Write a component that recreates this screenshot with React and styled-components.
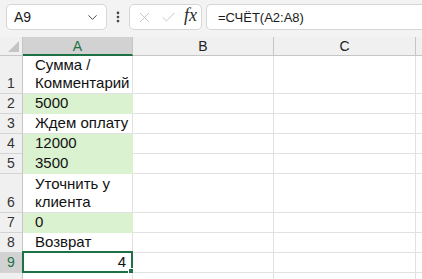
import React from "react";
import styled, { createGlobalStyle } from "styled-components";
import { ChevronDown, EllipsisVertical, X, Check } from "lucide-react";

const GREEN = "#1e7145";
const FILL = "#daf2d0";

const rows = [
  { n: 1, h: 38, lines: ["Сумма /", "Комментарий"] },
  { n: 2, h: 20, lines: ["5000"], fill: true },
  { n: 3, h: 20, lines: ["Ждем оплату"] },
  { n: 4, h: 20, lines: ["12000"], fill: true },
  { n: 5, h: 20, lines: ["3500"], fill: true },
  { n: 6, h: 39, lines: ["Уточнить у", "клиента"] },
  { n: 7, h: 20, lines: ["0"], fill: true },
  { n: 8, h: 20, lines: ["Возврат"] },
  { n: 9, h: 20, lines: ["4"], right: true, active: true },
  { n: "", h: 20, lines: [] },
];

const Global = createGlobalStyle`
  body {
    margin: 0;
    background: #f3f3f3;
    font-family: "Liberation Sans", Arial, sans-serif;
    overflow: hidden;
  }
`;

const Page = styled.div`
  width: 422px;
  height: 279px;
  overflow: hidden;
  background: #f3f3f3;
`;

const Toolbar = styled.div`
  display: flex;
  align-items: center;
  height: 26px;
  padding: 4px 0 7px 6px;
`;

const Box = styled.div`
  display: flex;
  align-items: center;
  height: 26px;
  box-sizing: border-box;
  background: #fff;
  border: 1px solid #d6d6d6;
  border-radius: 5px;
`;

const NameBox = styled(Box)`
  width: 101px;
  padding: 0 6px 0 0;
  font-size: 14px;
  color: #1a1a1a;
  span {
    flex: 1;
    padding-left: 7px;
  }
`;

const Dots = styled.div`
  display: flex;
  align-items: center;
  justify-content: center;
  width: 22px;
  color: #444;
`;

const ButtonsBox = styled(Box)`
  width: 73px;
  justify-content: space-between;
  padding: 0 4px 0 6px;
`;

const Fx = styled.span`
  font-family: "Liberation Serif", "Times New Roman", serif;
  font-style: italic;
  font-size: 18px;
  color: #2b2b2b;
  margin-top: -3px;
`;

const FormulaBox = styled(Box)`
  flex: 1;
  margin-left: 4px;
  border-right: none;
  border-radius: 5px 0 0 5px;
  padding-left: 11px;
  font-size: 13px;
  color: #1a1a1a;
`;

const Grid = styled.div`
  display: grid;
  grid-template-columns: 23px 110px 141px 142px 20px;
  background: #fff;
`;

const Corner = styled.div`
  height: 19px;
  box-sizing: border-box;
  background: #f0f0f0;
  border-right: 1px solid #c6c6c6;
  border-bottom: 1px solid #c6c6c6;
  position: relative;
  &::after {
    content: "";
    position: absolute;
    right: 3px;
    bottom: 3px;
    border-style: solid;
    border-width: 0 0 11px 11px;
    border-color: transparent transparent #c4c4c4 transparent;
  }
`;

const ColHead = styled.div`
  height: 19px;
  box-sizing: border-box;
  display: flex;
  align-items: center;
  justify-content: center;
  font-size: 14px;
  background: ${(p) => (p.$active ? "#d2d2d2" : "#f0f0f0")};
  color: ${(p) => (p.$active ? GREEN : "#222")};
  border-right: 1px solid #c6c6c6;
  border-bottom: ${(p) => (p.$active ? `2px solid ${GREEN}` : "1px solid #c6c6c6")};
`;

const RowHead = styled.div`
  height: ${(p) => p.$h}px;
  box-sizing: border-box;
  display: flex;
  align-items: flex-end;
  justify-content: center;
  padding-bottom: 2px;
  font-size: 14px;
  background: ${(p) => (p.$active ? "#d2d2d2" : "#f0f0f0")};
  color: ${(p) => (p.$active ? GREEN : "#333")};
  border-right: 1px solid #c6c6c6;
  border-bottom: 1px solid #d4d4d4;
`;

const Cell = styled.div`
  position: relative;
  height: ${(p) => p.$h}px;
  box-sizing: border-box;
  display: flex;
  flex-direction: column;
  justify-content: flex-end;
  align-items: ${(p) => (p.$right ? "flex-end" : "flex-start")};
  padding: 0 ${(p) => (p.$right ? "6px" : "0")} 1px 12px;
  font-size: 15px;
  line-height: 18px;
  color: #111;
  white-space: nowrap;
  background: ${(p) => (p.$fill ? FILL : "#fff")};
  border-right: 1px solid ${(p) => (p.$fill ? FILL : "#e1e1e1")};
  border-bottom: 1px solid ${(p) => (p.$fill ? FILL : "#e1e1e1")};
`;

const Selection = styled.div`
  position: absolute;
  left: -1px;
  top: -2px;
  right: -1px;
  bottom: -1px;
  border: 2px solid ${GREEN};
  pointer-events: none;
  &::after {
    content: "";
    position: absolute;
    right: -5px;
    bottom: -5px;
    width: 6px;
    height: 6px;
    background: ${GREEN};
    border: 1px solid #fff;
  }
`;

export default function App() {
  return (
    <Page>
      <Global />
      <Toolbar>
        <NameBox>
          <span>A9</span>
          <ChevronDown size={15} strokeWidth={1.4} color="#333" />
        </NameBox>
        <Dots>
          <EllipsisVertical size={14} strokeWidth={2.6} />
        </Dots>
        <ButtonsBox>
          <X size={17} strokeWidth={1.2} color="#bdbdbd" />
          <Check size={17} strokeWidth={1.2} color="#bdbdbd" />
          <Fx>fx</Fx>
        </ButtonsBox>
        <FormulaBox>=СЧЁТ(A2:A8)</FormulaBox>
      </Toolbar>
      <Grid>
        <Corner />
        <ColHead $active>A</ColHead>
        <ColHead>B</ColHead>
        <ColHead>C</ColHead>
        <ColHead />
        {rows.map((r, i) => (
          <React.Fragment key={i}>
            <RowHead $h={r.h} $active={r.active}>
              {r.n}
            </RowHead>
            <Cell $h={r.h} $fill={r.fill} $right={r.right}>
              {r.lines.map((l) => (
                <div key={l}>{l}</div>
              ))}
              {r.active && <Selection />}
            </Cell>
            <Cell $h={r.h} />
            <Cell $h={r.h} />
            <Cell $h={r.h} />
          </React.Fragment>
        ))}
      </Grid>
    </Page>
  );
}
